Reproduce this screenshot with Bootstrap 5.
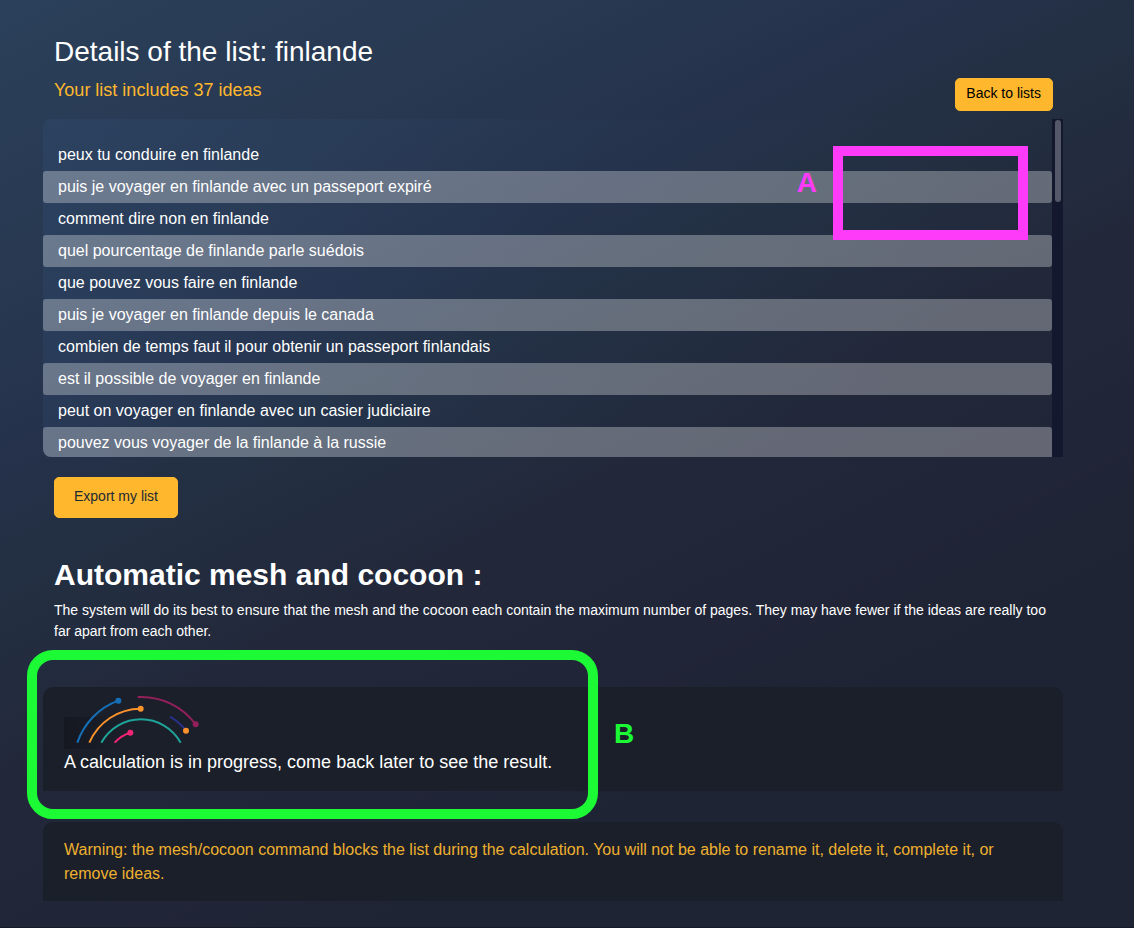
<!DOCTYPE html>
<html lang="en">
<head>
<meta charset="utf-8">
<meta name="viewport" content="width=device-width, initial-scale=1">
<title>Details of the list: finlande</title>
<link href="https://cdn.jsdelivr.net/npm/bootstrap@5.3.0/dist/css/bootstrap.min.css" rel="stylesheet">
<style>
  body {
    min-height: 100vh;
    color: #fff;
    font-family: "Liberation Sans", Arial, sans-serif;
    background: linear-gradient(154deg, #2b405a 0%, #283851 20%, #25314a 32%, #233043 38%, #22283a 53%, #212538 64%, #1f2434 75%, #1e2433 100%) no-repeat;
    border-bottom: 1px solid #171a26;
  }
  .page { padding: 34px 71px 26px 43px; }
  .inset { padding-left: 11px; padding-right: 10px; }
  .page-title { font-size: 28px; line-height: 36px; }
  .page-subtitle { font-size: 18px; line-height: 24px; color: #ffb72d; }
  .btn-amber {
    --bs-btn-bg: #ffb72d; --bs-btn-border-color: #ffb72d;
    --bs-btn-hover-bg: #f0a81e; --bs-btn-hover-border-color: #f0a81e;
    --bs-btn-font-size: 14px; --bs-btn-line-height: 20px;
    --bs-btn-border-radius: 5px;
  }
  .btn-back { --bs-btn-color: #000; padding: 4px 11px 7px 10px; }
  .btn-export { --bs-btn-color: #1c2a33; padding: 8px 19px 11px; margin-top: 20px; }
  .ideas {
    height: 338px;
    border-radius: 8px 0 0 8px;
    background: linear-gradient(110deg, rgba(48, 80, 120, .3), rgba(40, 66, 100, .1) 50%, rgba(30, 40, 60, 0) 85%);
  }
  .ideas ul { padding-top: 20px; }
  .ideas li { padding: 0 15px; line-height: 32px; border-radius: 3px; }
  .ideas li:nth-child(even) { background: rgba(255, 255, 255, .3); }
  .scroll-track { width: 11px; padding: 1px 2px 0 3px; background: #14182e; }
  .scroll-thumb { height: 82px; border-radius: 3px; background: #555869; }
  .section-title { font-size: 30px; line-height: 36px; margin: 39px 0 7px; }
  .intro { font-size: 14px; line-height: 21px; margin-bottom: 45px; }
  .panel { background: #1a1f2a; border-radius: 10px 10px 0 0; padding-left: 21px; padding-right: 40px; }
  .progress-note { font-size: 18px; line-height: 26px; }
  .warning { color: #eeb02f; line-height: 24px; margin-top: 31px; padding-top: 16px; padding-bottom: 15px; }
  .callout, .callout-label { position: absolute; pointer-events: none; }
  .callout { border: 10px solid; }
  .callout-label { font-size: 28px; line-height: 32px; font-weight: 700; }
  .tone-a { color: #ff3bfa; }
  .tone-b { color: #1cf935; }
  .callout.tone-a { top: 27px; right: 35px; width: 195px; height: 94px; }
  .callout-label.tone-a { top: 48px; right: 246px; }
  .callout.tone-b { top: -37px; left: -16px; width: 571px; height: 169px; border-radius: 26px; }
  .callout-label.tone-b { top: 31px; left: 571px; }
</style>
</head>
<body>
<main class="page">
  <h1 class="page-title inset fw-normal mb-2">Details of the list: finlande</h1>
  <div class="inset d-flex justify-content-between align-items-start mb-2">
    <p class="page-subtitle mb-0">Your list includes 37 ideas</p>
    <button type="button" class="btn btn-amber btn-back">Back to lists</button>
  </div>

  <section class="position-relative d-flex" aria-label="Ideas">
    <div class="ideas flex-grow-1 overflow-hidden">
      <ul class="list-unstyled mb-0">
        <li>peux tu conduire en finlande</li>
        <li>puis je voyager en finlande avec un passeport expiré</li>
        <li>comment dire non en finlande</li>
        <li>quel pourcentage de finlande parle suédois</li>
        <li>que pouvez vous faire en finlande</li>
        <li>puis je voyager en finlande depuis le canada</li>
        <li>combien de temps faut il pour obtenir un passeport finlandais</li>
        <li>est il possible de voyager en finlande</li>
        <li>peut on voyager en finlande avec un casier judiciaire</li>
        <li>pouvez vous voyager de la finlande à la russie</li>
      </ul>
    </div>
    <div class="scroll-track" aria-hidden="true"><div class="scroll-thumb"></div></div>
    <div class="callout tone-a"></div>
    <span class="callout-label tone-a">A</span>
  </section>

  <div class="inset">
    <button type="button" class="btn btn-amber btn-export">Export my list</button>
    <h2 class="section-title fw-bold">Automatic mesh and cocoon :</h2>
    <p class="intro">The system will do its best to ensure that the mesh and the cocoon each contain the maximum number of pages. They may have fewer if the ideas are really too far apart from each other.</p>
  </div>

  <section class="panel position-relative pb-3">
    <svg class="d-block" width="150" height="62" viewBox="72 21 450 186" fill="none" stroke-width="6" aria-hidden="true">
      <defs>
        <linearGradient id="shade"><stop stop-color="#151821"/><stop offset="1" stop-color="#151821" stop-opacity="0"/></linearGradient>
      </defs>
      <path d="M72 111h180v96H72z" fill="url(#shade)"/>
      <path d="M112 188A203 203 0 0 1 235 62" stroke="#1670b8"/>
      <path d="M148 188A168 168 0 0 1 302 86" stroke="#fb922c"/>
      <path d="M184 188A136 136 0 0 1 422 188" stroke="#1fa398"/>
      <path d="M224 188A101 101 0 0 1 271 158" stroke="#ee2474"/>
      <path d="M293 51A203 203 0 0 1 467 133" stroke="#931f5b"/>
      <path d="M390 110A169 169 0 0 1 438 152" stroke="#27318a"/>
      <circle cx="235" cy="62" r="9" fill="#1670b8"/>
      <circle cx="302" cy="86" r="9" fill="#fb922c"/>
      <circle cx="271" cy="158" r="9" fill="#ee2474"/>
      <circle cx="467" cy="133" r="9" fill="#931f5b"/>
      <circle cx="438" cy="152" r="9" fill="#fb922c"/>
    </svg>
    <p class="progress-note mb-0">A calculation is in progress, come back later to see the result.</p>
    <div class="callout tone-b"></div>
    <span class="callout-label tone-b">B</span>
  </section>

  <section class="panel warning">Warning: the mesh/cocoon command blocks the list during the calculation. You will not be able to rename it, delete it, complete it, or remove ideas.</section>
</main>
<script src="https://cdn.jsdelivr.net/npm/bootstrap@5.3.0/dist/js/bootstrap.bundle.min.js"></script>
</body>
</html>
